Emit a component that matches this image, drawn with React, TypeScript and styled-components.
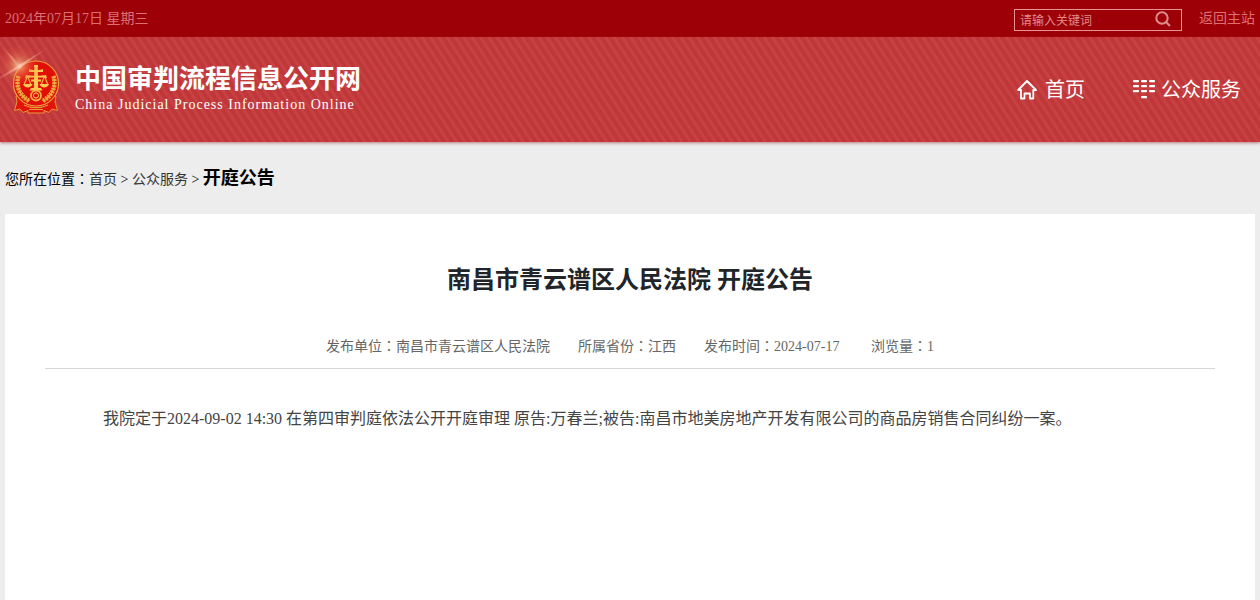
import React from "react";
import styled, { createGlobalStyle } from "styled-components";

const GlobalStyle = createGlobalStyle`
  * { box-sizing: border-box; }
  body {
    margin: 0;
    background: #ededed;
    color: #000;
    font-family: "Liberation Serif", "Noto Sans CJK SC", serif;
    font-size: 14px;
    line-height: 20px;
  }
  #root { min-height: 100vh; display: flex; flex-direction: column; }
  a { color: inherit; text-decoration: none; }
  h1, p { margin: 0; }
`;

const TopBar = styled.div`
  display: flex;
  align-items: center;
  justify-content: space-between;
  height: 37px;
  padding: 0 5px;
  background: #9e0008;
  color: #dc7074;
`;

const TopTools = styled.div`
  display: flex;
  align-items: center;
  gap: 17px;
`;

const SearchForm = styled.form`
  display: flex;
  align-items: center;
  width: 168px;
  height: 22px;
  margin-top: 3px;
  border: 1px solid #e69497;
`;

const SearchInput = styled.input`
  flex: 1;
  min-width: 0;
  height: 20px;
  padding: 2px 5px 0;
  border: 0;
  outline: 0;
  background: transparent;
  color: #e69497;
  font: 12px "Liberation Serif", "Noto Sans CJK SC", serif;
  &::placeholder { color: #e08a8d; opacity: 1; }
`;

const SearchButton = styled.button`
  display: flex;
  padding: 0 10px 3px;
  border: 0;
  background: transparent;
  color: #e08a8d;
`;

const Banner = styled.header`
  display: flex;
  align-items: center;
  justify-content: space-between;
  height: 105px;
  padding-right: 19px;
  background: repeating-linear-gradient(57deg, #c0373a 0 3px, #c74143 4px 6px, #c0373a 7px);
  box-shadow: 0 1px 3px rgba(150, 40, 45, 0.6);
  color: #fff;
`;

const Brand = styled.a`
  display: flex;
  align-items: center;
`;

const Emblem = styled.svg`
  width: 75px;
  height: 105px;
`;

const BrandName = styled.span`
  display: block;
  padding-bottom: 2px;
  font-size: 26px;
  font-weight: bold;
  line-height: 30px;
`;

const BrandSub = styled.span`
  display: block;
  padding-bottom: 2px;
  font-size: 14px;
  line-height: 16px;
  letter-spacing: 1px;
`;

const Nav = styled.nav`
  display: flex;
  gap: 48px;
`;

const NavLink = styled.a`
  display: flex;
  align-items: center;
  gap: 6px;
  font-size: 20px;
  line-height: 28px;
`;

const Breadcrumb = styled.nav`
  padding: 21px 5px 19px;
  line-height: 30px;
  a { color: #333; }
  strong { font-size: 18px; }
`;

/* Full-width colon centred in its em box */
const Colon = styled.span`
  font-family: "Noto Sans CJK TC", sans-serif;
  line-height: 1;
`;

const Article = styled.main`
  flex: 1;
  margin: 0 5px;
  padding: 46px 40px;
  background: #fff;
`;

const Title = styled.h1`
  font-size: 24px;
  line-height: 40px;
  text-align: center;
  color: #212529;
`;

const Meta = styled.div`
  display: flex;
  justify-content: center;
  gap: 28px;
  margin-top: 35px;
  padding-bottom: 9px;
  border-bottom: 1px solid #d6d6d6;
  line-height: 24px;
  color: #666;
`;

const Body = styled.p`
  padding: 34px 58px;
  font-size: 16px;
  line-height: 32px;
  color: #444;
`;

const CourtEmblem = () => (
  <Emblem viewBox="0 37 75 105" aria-hidden="true">
    <defs>
      <radialGradient id="glow">
        <stop offset="0" stopColor="#ffe9c8" />
        <stop offset="0.2" stopColor="#f5a878" stopOpacity="0.8" />
        <stop offset="0.6" stopColor="#e87850" stopOpacity="0.35" />
        <stop offset="1" stopColor="#e06040" stopOpacity="0" />
      </radialGradient>
      <linearGradient id="ray" x1="0" x2="1">
        <stop offset="0" stopColor="#f6b0a0" stopOpacity="0.3" />
        <stop offset="0.4" stopColor="#ffd9c0" />
        <stop offset="1" stopColor="#f6b0a0" stopOpacity="0" />
      </linearGradient>
    </defs>
    <path d="M16 96 17 102 14.500 110.500 20 109l3 3.500 5-2v2.500h16v-2.500l5 2 3-3.500 5.500 1.500L55 102l1-6z" fill="#e0140c" stroke="#e89838" strokeLinejoin="round" />
    <circle cx="36" cy="83.500" r="22.500" fill="#e01008" stroke="#f0a040" strokeWidth="1.200" />
    <path d="M18.500 76c-3 10 1 20 11 25M53.500 76c3 10-1 20-11 25" fill="none" stroke="#eba83c" strokeWidth="4.500" strokeDasharray="2.200 0.800" />
    <path d="M18.500 76c-3 10 1 20 11 25M53.500 76c3 10-1 20-11 25" fill="none" stroke="#eba83c" strokeWidth="1.200" />
    <path d="M34 67h4v-2h-4zM34.300 67h3.400l.5 22h-4.400z" fill="#ffc850" />
    <path d="M29 69c2 1.500 12 1.500 14 0v3H29zM26 75c3 1 17 1 20 0l1 3c-3-.8-19-.8-22 0zM31 79.500h10v2H31zM31 88h10l1.500 2.500h-13z" fill="#ffc850" />
    <path d="m27.500 76-3.500 9M27.500 76l3.500 9M44.500 76l-3.500 9M44.500 76l3.500 9" stroke="#f8b844" fill="none" strokeWidth="1.200" />
    <path d="M23 84h9.500c-1 4.500-8.500 4.500-9.500 0zM39.500 84H49c-1 4.500-8.500 4.500-9.500 0z" fill="#ffc850" />
    <circle cx="36" cy="95.500" r="5" fill="#e01008" stroke="#f4b040" strokeWidth="1.800" />
    <circle cx="36" cy="95.500" r="2.600" fill="#e01008" stroke="#ffd060" strokeWidth="1" />
    <path d="M24 105c7 3.500 17 3.500 24 0M29 109.500h14" stroke="#e89838" fill="none" strokeWidth="1.200" />
    <circle cx="19" cy="66" r="21" fill="url(#glow)" opacity="0.8" />
    <path d="M0 77 19 65 52 45 20 67.500 0 79z" fill="url(#ray)" opacity="0.65" />
    <path d="m2 46 16 17 8 10-10-8z" fill="url(#ray)" opacity="0.4" />
  </Emblem>
);

const SearchIcon = () => (
  <svg width="16" height="16" viewBox="0 0 16 16" fill="none" stroke="currentColor" strokeWidth="2" aria-hidden="true">
    <circle cx="7" cy="7" r="5.700" />
    <path d="m11 11 4 4" />
  </svg>
);

const HomeIcon = () => (
  <svg width="22" height="22" viewBox="0 0 22 22" fill="none" stroke="currentColor" strokeWidth="1.800" strokeLinejoin="round" strokeLinecap="round" aria-hidden="true">
    <path d="M1.200 11 10 2l9 9h-2.700v8.500H13v-5H7.500v5H4V11z" />
  </svg>
);

const GridIcon = () => (
  <svg width="22" height="20" viewBox="0 0 22 20" fill="currentColor" aria-hidden="true">
    {[0, 5, 10].map((y) =>
      [0, 8, 16].map((x) => <rect key={`${x}-${y}`} x={x} y={y} width="6" height="2.200" rx="0.800" />)
    )}
    <rect x="8" y="16" width="6" height="2.200" rx="0.800" />
  </svg>
);

export default function App() {
  return (
    <>
      <GlobalStyle />
      <TopBar>
        <span>2024年07月17日 星期三</span>
        <TopTools>
          <SearchForm role="search" onSubmit={(e) => e.preventDefault()}>
            <SearchInput type="text" aria-label="请输入关键词" placeholder="请输入关键词" />
            <SearchButton type="submit" aria-label="搜索"><SearchIcon /></SearchButton>
          </SearchForm>
          <a href="#main">返回主站</a>
        </TopTools>
      </TopBar>
      <Banner>
        <Brand href="#home">
          <CourtEmblem />
          <span>
            <BrandName>中国审判流程信息公开网</BrandName>
            <BrandSub>China Judicial Process Information Online</BrandSub>
          </span>
        </Brand>
        <Nav>
          <NavLink href="#home"><HomeIcon />首页</NavLink>
          <NavLink href="#service"><GridIcon />公众服务</NavLink>
        </Nav>
      </Banner>
      <Breadcrumb>
        您所在位置<Colon>：</Colon><a href="#home">首页</a> &gt; <a href="#service">公众服务</a> &gt; <strong>开庭公告</strong>
      </Breadcrumb>
      <Article id="main">
        <Title>南昌市青云谱区人民法院 开庭公告</Title>
        <Meta>
          <span>发布单位<Colon>：</Colon>南昌市青云谱区人民法院</span>
          <span>所属省份<Colon>：</Colon>江西</span>
          <span>发布时间<Colon>：</Colon>2024-07-17&nbsp;</span>
          <span>浏览量<Colon>：</Colon>1</span>
        </Meta>
        <Body>我院定于2024-09-02 14:30 在第四审判庭依法公开开庭审理 原告:万春兰;被告:南昌市地美房地产开发有限公司的商品房销售合同纠纷一案。</Body>
      </Article>
    </>
  );
}
